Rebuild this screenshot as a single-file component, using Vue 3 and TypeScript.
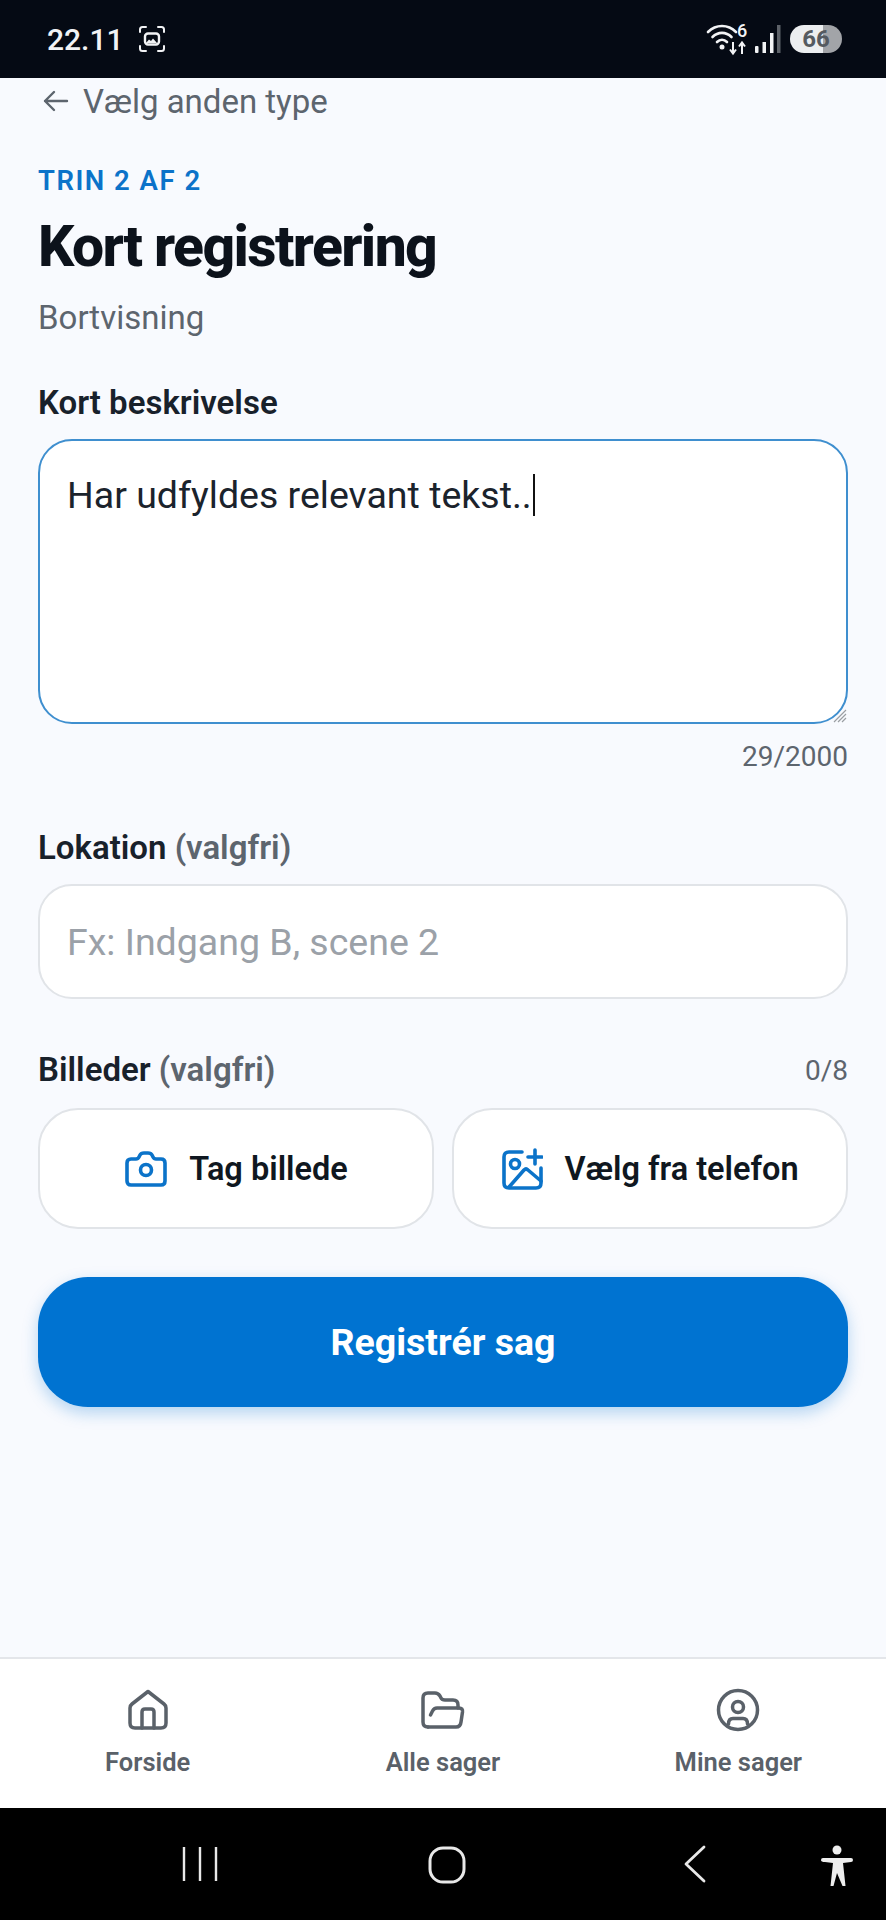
<template>
  <div class="screen">
    <header class="status-bar">
      <div class="status-left">
        <span class="clock">22.11</span>
        <svg class="capture-icon" width="30" height="30" viewBox="0 0 30 30" fill="none">
          <path d="M3 8V5.500Q3 3 5.500 3H9M21 3h3.500Q27 3 27 5.500V8M3 22v2.500Q3 27 5.500 27H9M21 27h3.500Q27 27 27 24.500V22" stroke="#f2f3f5" stroke-width="2" stroke-linecap="round" />
          <rect x="8" y="9.500" width="14" height="11" rx="3" stroke="#f2f3f5" stroke-width="2.400" />
          <path d="M9 19l3-3.500 2 1.500 2-2.500 4 4.500z" fill="#f2f3f5" />
        </svg>
      </div>
      <div class="status-right">
        <svg width="44" height="36" viewBox="0 0 44 36" fill="none">
          <path d="M2 11C10 3 22 3 30 11M6.500 16C12 10.500 20 10.500 25.500 16M11 21C14 18 18 18 21 21" stroke="#f2f3f5" stroke-width="2.600" stroke-linecap="round" />
          <circle cx="16" cy="26" r="2.500" fill="#f2f3f5" />
          <path d="M27 21v11M24 28.500l3 4 3-4M36 33V22M33 25.500l3-4 3 4" stroke="#f2f3f5" stroke-width="2" />
          <text x="31" y="16" class="wifi-six">6</text>
        </svg>
        <svg class="signal" width="26" height="28" viewBox="0 0 26 28">
          <rect x="0" y="21" width="3.500" height="7" rx="1" fill="#f2f3f5" />
          <rect x="7.500" y="17" width="3.500" height="11" fill="#f2f3f5" />
          <rect x="15" y="8" width="3.500" height="20" fill="#f2f3f5" />
          <rect x="22" y="0" width="3.500" height="28" fill="#5d6269" />
        </svg>
        <div class="battery">
          <span class="battery-level">66</span>
        </div>
      </div>
    </header>

    <main class="content">
      <a class="back-link">
        <svg width="28" height="28" viewBox="0 0 28 28" fill="none">
          <path d="M26 14H4M13 5l-9 9 9 9" stroke="#5d656e" stroke-width="2.400" stroke-linecap="round" stroke-linejoin="round" />
        </svg>
        <span>Vælg anden type</span>
      </a>
      <p class="step">TRIN 2 AF 2</p>
      <h1 class="title">Kort registrering</h1>
      <p class="subtitle">Bortvisning</p>

      <label class="field-label description-label">Kort beskrivelse</label>
      <div class="textarea">
        <span>Har udfyldes relevant tekst..</span><i class="caret"></i>
        <svg class="resize-grip" width="14" height="14" viewBox="0 0 14 14" stroke="#9a9ea3" stroke-width="1.200">
          <path d="M13 1L1 13M13 5L5 13M13 9L9 13" />
        </svg>
      </div>
      <div class="char-count">29/2000</div>

      <label class="field-label location-label">Lokation <em>(valgfri)</em></label>
      <div class="input">Fx: Indgang B, scene 2</div>

      <div class="photos-head">
        <label class="field-label">Billeder <em>(valgfri)</em></label>
        <span class="photo-count">0/8</span>
      </div>
      <div class="photo-actions">
        <button class="photo-button" type="button">
          <svg width="44" height="38" viewBox="0 0 44 38" fill="none" stroke="#0b73c9" stroke-width="3.600" stroke-linejoin="round">
            <path d="M7 9H12Q14 9 15 7L16 5Q17 3 20 3H24Q27 3 28 5L29 7Q30 9 32 9H37Q41 9 41 13V31Q41 35 37 35H7Q3 35 3 31V13Q3 9 7 9Z" />
            <circle cx="22" cy="20" r="5.500" />
          </svg>
          <span>Tag billede</span>
        </button>
        <button class="photo-button" type="button">
          <svg width="42" height="42" viewBox="0 0 42 42" fill="none" stroke="#0b73c9" stroke-width="3.600" stroke-linecap="round" stroke-linejoin="round">
            <path d="M21 4H8Q3 4 3 9V35Q3 40 8 40H35Q40 40 40 35V20" />
            <circle cx="14" cy="16" r="4.500" />
            <path d="M8 39L23 22Q25 20 27 22L40 33M34 2V16M27 9H41" />
          </svg>
          <span>Vælg fra telefon</span>
        </button>
      </div>

      <button class="submit" type="button">Registrér sag</button>
    </main>

    <nav class="tab-bar">
      <div v-for="tab in tabs" :key="tab.label" class="tab">
        <svg width="44" height="44" viewBox="0 0 44 44" fill="none" stroke="#5a6169" stroke-width="3.500" stroke-linecap="round" stroke-linejoin="round" v-html="tab.icon"></svg>
        <span>{{ tab.label }}</span>
      </div>
    </nav>

    <footer class="system-nav">
      <svg class="sys-recents" width="36" height="36" viewBox="0 0 36 36" stroke="#e8e8e8" stroke-width="2.400">
        <path d="M2 1v34M18 1v34M34 1v34" />
      </svg>
      <svg class="sys-home" width="38" height="38" viewBox="0 0 38 38" fill="none" stroke="#e8e8e8" stroke-width="3">
        <rect x="2" y="2" width="34" height="34" rx="13" />
      </svg>
      <svg class="sys-back" width="26" height="38" viewBox="0 0 26 38" fill="none" stroke="#e8e8e8" stroke-width="2.800" stroke-linecap="round" stroke-linejoin="round">
        <path d="M22 2L4 19l18 17" />
      </svg>
      <svg class="sys-access" width="32" height="42" viewBox="0 0 32 42" fill="#eeeeee">
        <circle cx="16" cy="5" r="4.500" />
        <path d="M2 13h28q2 0 2 2t-2 2l-8 1 2.500 23h-3L16 28l-3.500 13h-3L12 18l-8-1q-4 0-4-2t2-2z" />
      </svg>
    </footer>
  </div>
</template>

<script setup lang="ts">
interface Tab {
  readonly label: string
  readonly icon: string
}

const tabs: readonly Tab[] = [
  {
    label: 'Forside',
    icon: '<path d="M22 3.500L6 16Q4 17.500 4 20V35Q4 40 9 40H35Q40 40 40 35V20Q40 17.500 38 16Z"/><path d="M16 40V24Q16 21 19 21H25Q28 21 28 24V40"/>',
  },
  {
    label: 'Alle sager',
    icon: '<path d="M7 39Q2 39 2 34V10Q2 5 7 5H14Q17 5 19 8L20 10Q21 12 24 12H32Q37 12 37 17V20"/><path d="M9.500 27L11.500 23Q13 20 16 20H38Q42 20 41.500 24L40 34Q39.500 39 35 39H7"/>',
  },
  {
    label: 'Mine sager',
    icon: '<circle cx="22" cy="22" r="19.500"/><circle cx="22" cy="19" r="5.500"/><path d="M12.500 36Q12.500 30.500 17 30.500H27Q31.500 30.500 31.500 36"/>',
  },
]
</script>

<style scoped>
.screen {
  width: 886px;
  height: 1920px;
  display: flex;
  flex-direction: column;
  background: #f8fafe;
  color: #0f1720;
  font-family: Roboto, "Liberation Sans", sans-serif;
  overflow: hidden;
}

.status-bar {
  flex: 0 0 78px;
  background: #050a14;
  display: flex;
  align-items: center;
  justify-content: space-between;
  padding: 0 44px 0 47px;
  color: #f2f3f5;
}

.status-left,
.status-right {
  display: flex;
  align-items: center;
}

.clock {
  font-size: 30px;
  font-weight: 500;
  margin-right: 13px;
}

.wifi-six {
  font: 500 18px Roboto, sans-serif;
  fill: #f2f3f5;
}

.signal {
  margin: 0 0 0 5px;
}

.battery {
  width: 52px;
  height: 28px;
  margin-left: 9px;
  border-radius: 14px;
  background: linear-gradient(90deg, #eceef0 63%, #a2a4a8 63%);
  display: flex;
  align-items: center;
  justify-content: center;
}

.battery-level {
  font-size: 24px;
  font-weight: 700;
  color: #555a60;
}

.content {
  flex: 1;
  padding: 0 38px;
  display: flex;
  flex-direction: column;
}

.back-link {
  display: flex;
  align-items: center;
  gap: 14px;
  padding: 2px 0 0 3px;
  height: 42px;
  font-size: 33px;
  color: #5d656e;
}

.step {
  margin: 42px 0 0;
  font-size: 27.500px;
  line-height: 34px;
  font-weight: 600;
  letter-spacing: 1.500px;
  color: #0b73c9;
}

.title {
  margin: 16px 0 0;
  font-size: 57px;
  line-height: 66px;
  font-weight: 800;
  letter-spacing: -1.600px;
  color: #0c121b;
}

.subtitle {
  margin: 18px 0 0;
  font-size: 33px;
  line-height: 40px;
  color: #5d656e;
}

.field-label {
  font-size: 33px;
  line-height: 38px;
  font-weight: 600;
  color: #18212b;
}

.field-label em {
  font-style: normal;
  color: #5d656e;
}

.description-label {
  margin-top: 46px;
}

.textarea {
  position: relative;
  box-sizing: border-box;
  height: 285px;
  margin-top: 17px;
  padding: 33px 27px;
  background: #fff;
  border: 2px solid #3f8fcf;
  border-radius: 34px;
  font-size: 37.500px;
  line-height: 42px;
  color: #1b232c;
}

.caret {
  display: inline-block;
  width: 2px;
  height: 42px;
  margin-left: 1px;
  vertical-align: top;
  background: #111;
}

.resize-grip {
  position: absolute;
  right: -1px;
  bottom: -1px;
}

.char-count {
  margin-top: 15px;
  text-align: right;
  font-size: 28px;
  line-height: 36px;
  color: #5d656e;
}

.location-label {
  margin-top: 54px;
}

.input {
  box-sizing: border-box;
  height: 115px;
  margin-top: 17px;
  padding: 0 27px;
  display: flex;
  align-items: center;
  background: #fff;
  border: 2px solid #e1e4e8;
  border-radius: 34px;
  font-size: 37.500px;
  color: #9ba1a8;
}

.photos-head {
  margin-top: 52px;
  display: flex;
  align-items: center;
  justify-content: space-between;
}

.photo-count {
  font-size: 28px;
  color: #5d656e;
}

.photo-actions {
  margin-top: 19px;
  display: grid;
  grid-template-columns: 1fr 1fr;
  gap: 18px;
}

.photo-button {
  box-sizing: border-box;
  height: 121px;
  display: flex;
  align-items: center;
  justify-content: center;
  gap: 21px;
  padding: 0;
  background: #fff;
  border: 2px solid #e1e4e8;
  border-radius: 40px;
  font-family: inherit;
  font-size: 32.500px;
  font-weight: 600;
  color: #0f1720;
}

.submit {
  height: 130px;
  margin-top: 48px;
  border: 0;
  border-radius: 50px;
  background: #0073d1;
  box-shadow: 0 6px 16px rgba(0, 115, 209, 0.28);
  font-family: inherit;
  font-size: 37.500px;
  font-weight: 700;
  color: #fff;
}

.tab-bar {
  flex: 0 0 151px;
  box-sizing: border-box;
  display: grid;
  grid-template-columns: repeat(3, 1fr);
  padding-top: 29px;
  background: #fff;
  border-top: 2px solid #e4e6ea;
}

.tab {
  display: flex;
  flex-direction: column;
  align-items: center;
  gap: 13px;
  font-size: 25.500px;
  line-height: 34px;
  font-weight: 600;
  color: #5a6169;
}

.system-nav {
  position: relative;
  flex: 0 0 112px;
  background: #000;
}

.sys-recents,
.sys-home,
.sys-back,
.sys-access {
  position: absolute;
}

.sys-recents {
  left: 182px;
  top: 38px;
}

.sys-home {
  left: 428px;
  top: 38px;
}

.sys-back {
  left: 682px;
  top: 37px;
}

.sys-access {
  left: 821px;
  top: 37px;
}
</style>
